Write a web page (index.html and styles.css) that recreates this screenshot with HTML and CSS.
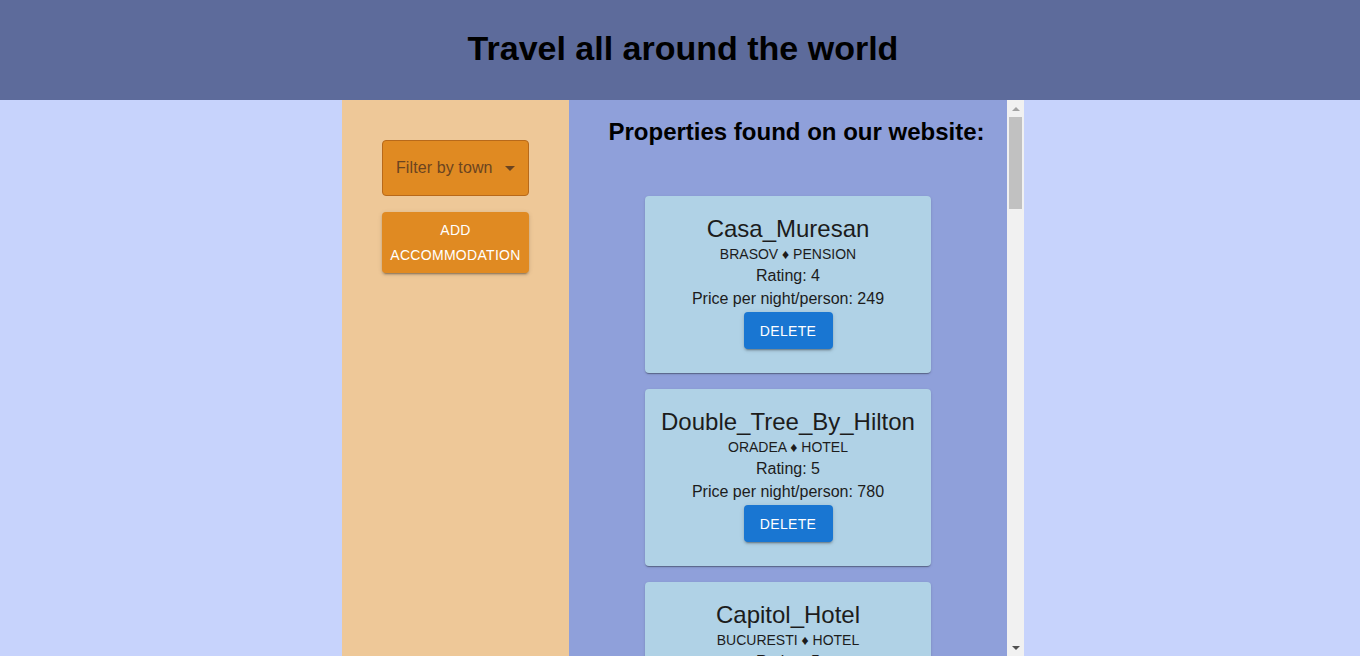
FILE: index.html
```html
<!DOCTYPE html>
<html lang="en">
<head>
<meta charset="utf-8">
<title>Travel all around the world</title>
<link rel="stylesheet" href="styles.css">
</head>
<body>
<div class="page">
  <header class="top">
    <h1 class="top-title">Travel all around the world</h1>
  </header>
  <main class="layout">
    <aside class="side">
      <div class="select">
        <span class="select-label">Filter by town</span>
        <span class="select-arrow"></span>
      </div>
      <button class="add-btn">Add accommodation</button>
    </aside>
    <section class="list">
      <div class="list-body">
        <h2 class="list-title">Properties found on our website:</h2>
        <div class="cards">
          <article class="card">
            <div class="card-name">Casa_Muresan</div>
            <div class="card-meta">Brasov ♦ Pension</div>
            <div class="card-line">Rating: 4</div>
            <div class="card-line">Price per night/person: 249</div>
            <button class="del-btn">Delete</button>
          </article>
          <article class="card">
            <div class="card-name">Double_Tree_By_Hilton</div>
            <div class="card-meta">Oradea ♦ Hotel</div>
            <div class="card-line">Rating: 5</div>
            <div class="card-line">Price per night/person: 780</div>
            <button class="del-btn">Delete</button>
          </article>
          <article class="card">
            <div class="card-name">Capitol_Hotel</div>
            <div class="card-meta">Bucuresti ♦ Hotel</div>
            <div class="card-line">Rating: 5</div>
            <div class="card-line">Price per night/person: 520</div>
            <button class="del-btn">Delete</button>
          </article>
        </div>
      </div>
      <div class="scrollbar">
        <span class="sb-up"></span>
        <div class="sb-track"><div class="sb-thumb"></div></div>
        <span class="sb-down"></span>
      </div>
    </section>
  </main>
</div>
</body>
</html>
```
FILE: styles.css
```css
* { box-sizing: border-box; }
html, body { margin: 0; height: 100%; }
body {
  background: #c7d3fc;
  font-family: "Liberation Sans", Arial, sans-serif;
  color: #1c1c1c;
  overflow: hidden;
}
.page {
  padding-left: 6px;
  height: 100%;
  display: flex;
  flex-direction: column;
}
.top {
  height: 100px;
  flex: none;
  margin-left: -6px;
  padding-left: 6px;
  background: #5d6b9b;
  display: flex;
  align-items: center;
  justify-content: center;
}
.top-title {
  margin: 0 0 4px 0;
  font-size: 34px;
  font-weight: bold;
  color: #000;
}
.layout {
  width: 682px;
  margin: 0 auto;
  flex: 1;
  min-height: 0;
  display: flex;
}
.side {
  width: 227px;
  flex: none;
  background: #eec898;
  display: flex;
  flex-direction: column;
  align-items: center;
  padding-top: 40px;
  gap: 16px;
}
.select {
  width: 147px;
  height: 56px;
  background: #e08a22;
  border: 1px solid #b8691a;
  border-radius: 4px;
  display: flex;
  align-items: center;
  justify-content: space-between;
  padding: 0 13px 0 13px;
  color: #6b4420;
  font-size: 16px;
  letter-spacing: 0.1px;
}
.select-arrow {
  width: 0;
  height: 0;
  border-left: 5px solid transparent;
  border-right: 5px solid transparent;
  border-top: 5px solid #6b4420;
}
.add-btn {
  width: 147px;
  height: 61px;
  background: #e08a22;
  border: none;
  border-radius: 4px;
  color: #fff;
  font-family: "Liberation Sans", Arial, sans-serif;
  font-size: 14px;
  letter-spacing: 0.3px;
  line-height: 25px;
  text-transform: uppercase;
  padding: 6px 4px;
  box-shadow: 0 3px 1px -2px rgba(0,0,0,0.2), 0 2px 2px 0 rgba(0,0,0,0.14), 0 1px 5px 0 rgba(0,0,0,0.12);
}
.list {
  flex: 1;
  background: #8fa0da;
  display: flex;
  min-height: 0;
}
.list-body {
  flex: 1;
  overflow: hidden;
}
.list-title {
  margin: 18px 0 0 0;
  padding-left: 17px;
  white-space: nowrap;
  text-align: center;
  font-size: 24px;
  line-height: 28px;
  font-weight: bold;
  color: #000;
}
.cards {
  display: flex;
  flex-direction: column;
  align-items: center;
  gap: 16px;
  padding: 50px 0 16px;
}
.card {
  width: 286px;
  background: #b0d2e6;
  border-radius: 4px;
  box-shadow: 0 2px 1px -1px rgba(0,0,0,0.2), 0 1px 1px 0 rgba(0,0,0,0.14), 0 1px 3px 0 rgba(0,0,0,0.12);
  padding: 16px 12px 24px;
  display: flex;
  flex-direction: column;
  align-items: center;
  text-align: center;
}
.card-name {
  font-size: 24px;
  line-height: 33px;
}
.card-meta {
  font-size: 14px;
  text-transform: uppercase;
  line-height: 19px;
}
.card-line {
  font-size: 16px;
  line-height: 23px;
}
.card-line + .card-line {
  line-height: 24px;
}
.del-btn {
  margin-top: 1px;
  width: 89px;
  height: 37px;
  background: #1976d2;
  color: #fff;
  border: none;
  border-radius: 4px;
  font-family: "Liberation Sans", Arial, sans-serif;
  font-size: 14px;
  letter-spacing: 0.3px;
  text-transform: uppercase;
  box-shadow: 0 3px 1px -2px rgba(0,0,0,0.2), 0 2px 2px 0 rgba(0,0,0,0.14), 0 1px 5px 0 rgba(0,0,0,0.12);
}
.scrollbar {
  width: 17px;
  flex: none;
  background: #f1f1f1;
  display: flex;
  flex-direction: column;
  align-items: center;
}
.sb-up, .sb-down {
  height: 17px;
  flex: none;
  display: flex;
  align-items: center;
  justify-content: center;
}
.sb-up::before {
  content: "";
  border-left: 4px solid transparent;
  border-right: 4px solid transparent;
  border-bottom: 4px solid #a3a3a3;
}
.sb-down::before {
  content: "";
  border-left: 4px solid transparent;
  border-right: 4px solid transparent;
  border-top: 4px solid #505050;
}
.sb-track {
  flex: 1;
  width: 100%;
  padding: 0 2px;
}
.sb-thumb {
  height: 92px;
  background: #c1c1c1;
}
```
